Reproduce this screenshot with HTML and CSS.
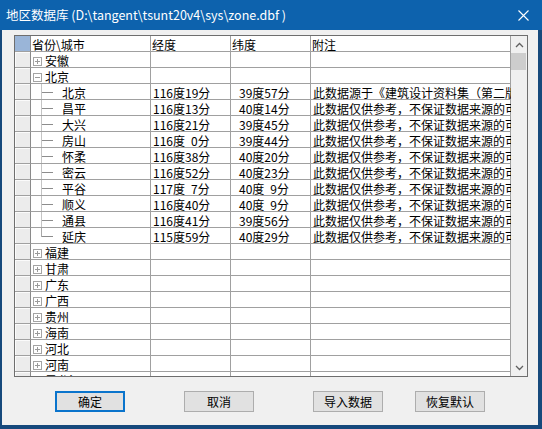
FILE: index.html
```html
<!DOCTYPE html>
<html lang="zh">
<head>
<meta charset="utf-8">
<title>地区数据库</title>
<link rel="stylesheet" href="styles.css">
</head>
<body>
<div class="window">
  <div class="titlebar">
    <span class="title">地区数据库 (D:\tangent\tsunt20v4\sys\zone.dbf )</span>
    <span class="close"><svg width="11" height="11" viewBox="0 0 11 11"><path d="M0.5 0.5L10.5 10.5M10.5 0.5L0.5 10.5" stroke="#fff" stroke-width="1.1" fill="none"/></svg></span>
  </div>
  <div class="client">
    <div class="grid">
      <div class="rows">
        <div class="row head"><div class="rh corner"></div><div class="c c1 hd"><span class="ht">省份\城市</span></div><div class="c c2 hd">经度</div><div class="c c3 hd">纬度</div><div class="c c4 hd">附注</div></div>
        <div class="row"><div class="rh"></div><div class="c c1"><span class="box plus"></span><span class="pt">安徽</span></div><div class="c c2"></div><div class="c c3"></div><div class="c c4"></div></div>
        <div class="row"><div class="rh"></div><div class="c c1"><span class="box"></span><span class="pt">北京</span></div><div class="c c2"></div><div class="c c3"></div><div class="c c4"></div></div>
        <div class="row"><div class="rh"></div><div class="c c1"><span class="branch"></span><span class="ct">北京</span></div><div class="c c2">116度19分</div><div class="c c3">39度57分</div><div class="c c4">此数据源于《建筑设计资料集（第二版）》</div></div>
        <div class="row"><div class="rh"></div><div class="c c1"><span class="branch"></span><span class="ct">昌平</span></div><div class="c c2">116度13分</div><div class="c c3">40度14分</div><div class="c c4">此数据仅供参考，不保证数据来源的可靠性</div></div>
        <div class="row"><div class="rh"></div><div class="c c1"><span class="branch"></span><span class="ct">大兴</span></div><div class="c c2">116度21分</div><div class="c c3">39度45分</div><div class="c c4">此数据仅供参考，不保证数据来源的可靠性</div></div>
        <div class="row"><div class="rh"></div><div class="c c1"><span class="branch"></span><span class="ct">房山</span></div><div class="c c2">116度&ensp;0分</div><div class="c c3">39度44分</div><div class="c c4">此数据仅供参考，不保证数据来源的可靠性</div></div>
        <div class="row"><div class="rh"></div><div class="c c1"><span class="branch"></span><span class="ct">怀柔</span></div><div class="c c2">116度38分</div><div class="c c3">40度20分</div><div class="c c4">此数据仅供参考，不保证数据来源的可靠性</div></div>
        <div class="row"><div class="rh"></div><div class="c c1"><span class="branch"></span><span class="ct">密云</span></div><div class="c c2">116度52分</div><div class="c c3">40度23分</div><div class="c c4">此数据仅供参考，不保证数据来源的可靠性</div></div>
        <div class="row"><div class="rh"></div><div class="c c1"><span class="branch"></span><span class="ct">平谷</span></div><div class="c c2">117度&ensp;7分</div><div class="c c3">40度&ensp;9分</div><div class="c c4">此数据仅供参考，不保证数据来源的可靠性</div></div>
        <div class="row"><div class="rh"></div><div class="c c1"><span class="branch"></span><span class="ct">顺义</span></div><div class="c c2">116度40分</div><div class="c c3">40度&ensp;9分</div><div class="c c4">此数据仅供参考，不保证数据来源的可靠性</div></div>
        <div class="row"><div class="rh"></div><div class="c c1"><span class="branch"></span><span class="ct">通县</span></div><div class="c c2">116度41分</div><div class="c c3">39度56分</div><div class="c c4">此数据仅供参考，不保证数据来源的可靠性</div></div>
        <div class="row"><div class="rh"></div><div class="c c1"><span class="branch last"></span><span class="ct">延庆</span></div><div class="c c2">115度59分</div><div class="c c3">40度29分</div><div class="c c4">此数据仅供参考，不保证数据来源的可靠性</div></div>
        <div class="row"><div class="rh"></div><div class="c c1"><span class="box plus"></span><span class="pt">福建</span></div><div class="c c2"></div><div class="c c3"></div><div class="c c4"></div></div>
        <div class="row"><div class="rh"></div><div class="c c1"><span class="box plus"></span><span class="pt">甘肃</span></div><div class="c c2"></div><div class="c c3"></div><div class="c c4"></div></div>
        <div class="row"><div class="rh"></div><div class="c c1"><span class="box plus"></span><span class="pt">广东</span></div><div class="c c2"></div><div class="c c3"></div><div class="c c4"></div></div>
        <div class="row"><div class="rh"></div><div class="c c1"><span class="box plus"></span><span class="pt">广西</span></div><div class="c c2"></div><div class="c c3"></div><div class="c c4"></div></div>
        <div class="row"><div class="rh"></div><div class="c c1"><span class="box plus"></span><span class="pt">贵州</span></div><div class="c c2"></div><div class="c c3"></div><div class="c c4"></div></div>
        <div class="row"><div class="rh"></div><div class="c c1"><span class="box plus"></span><span class="pt">海南</span></div><div class="c c2"></div><div class="c c3"></div><div class="c c4"></div></div>
        <div class="row"><div class="rh"></div><div class="c c1"><span class="box plus"></span><span class="pt">河北</span></div><div class="c c2"></div><div class="c c3"></div><div class="c c4"></div></div>
        <div class="row"><div class="rh"></div><div class="c c1"><span class="box plus"></span><span class="pt">河南</span></div><div class="c c2"></div><div class="c c3"></div><div class="c c4"></div></div>
        <div class="row"><div class="rh"></div><div class="c c1"><span class="box plus"></span><span class="pt">黑龙江</span></div><div class="c c2"></div><div class="c c3"></div><div class="c c4"></div></div>
      </div>
      <div class="vscroll">
        <div class="arrow"><svg width="9" height="6" viewBox="0 0 9 6"><path d="M1 5L4.5 1.5L8 5" stroke="#606060" stroke-width="1.3" fill="none"/></svg></div>
        <div class="thumb"></div>
        <div class="track"></div>
        <div class="arrow"><svg width="9" height="6" viewBox="0 0 9 6"><path d="M1 1L4.5 4.5L8 1" stroke="#606060" stroke-width="1.3" fill="none"/></svg></div>
      </div>
    </div>
    <div class="buttons">
      <div class="btn default">确定</div>
      <div class="btn">取消</div>
      <div class="btn">导入数据</div>
      <div class="btn last">恢复默认</div>
    </div>
  </div>
</div>
</body>
</html>
```

FILE: styles.css
```css
html, body {
  margin: 0;
  padding: 0;
  background: #f0f0f0;
}

.window {
  width: 542px;
  height: 429px;
  background: #16497c;
  display: flex;
  flex-direction: column;
  font-family: "Noto Sans CJK SC", "Liberation Sans", sans-serif;
  font-size: 12px;
  color: #000;
  overflow: hidden;
}

.titlebar {
  height: 30px;
  flex: none;
  background: #0d62ad;
  display: flex;
  align-items: center;
  color: #fff;
}

.title {
  padding-left: 6px;
  font-size: 12.5px;
  line-height: 30px;
  white-space: nowrap;
}

.close {
  margin-left: auto;
  margin-right: 13px;
  display: flex;
}

.client {
  flex: 1;
  margin: 0 4px 4px 2px;
  background: #f0f0f0;
  padding: 5px 0 0 12px;
  display: flex;
  flex-direction: column;
}

.grid {
  width: 512px;
  height: 340px;
  border: 1px solid #6e6e6e;
  background: #fff;
  display: flex;
  flex: none;
}

.rows {
  width: 496px;
  height: 340px;
  overflow: hidden;
}

.row {
  display: grid;
  grid-template-columns: 16px 120px 80px 80px 200px;
  height: 16px;
}

.rh {
  box-sizing: border-box;
  height: 16px;
  background: #ececec;
  border-right: 1px solid #8a8a8a;
  border-bottom: 1px solid #a0a0a0;
  box-shadow: inset 1px 1px 0 #fbfbfb;
}

.rh.corner {
  background: #9ab5d8;
  box-shadow: none;
}

.c {
  box-sizing: border-box;
  height: 16px;
  border-right: 1px solid #a0a0a0;
  border-bottom: 1px solid #a0a0a0;
  padding: 2px 0 0 2px;
  line-height: 13px;
  white-space: nowrap;
}

.c3 {
  padding-left: 8px;
}

.hd {
  padding-left: 1px;
}

.c1 {
  display: flex;
  align-items: flex-start;
  padding-top: 0;
}

.c1 .pt,
.c1 .ct,
.c1 .ht {
  padding-top: 2px;
  line-height: 13px;
}

.box {
  flex: none;
  box-sizing: border-box;
  width: 9px;
  height: 9px;
  margin-top: 5px;
  border: 1px solid #a4a4a4;
  background:
    linear-gradient(#9a9a9a, #9a9a9a) 1px 3px / 5px 1px no-repeat;
}

.box.plus {
  background:
    linear-gradient(#9a9a9a, #9a9a9a) 1px 3px / 5px 1px no-repeat,
    linear-gradient(#9a9a9a, #9a9a9a) 3px 1px / 1px 5px no-repeat;
}

.pt {
  margin-left: 3px;
}

.branch {
  flex: none;
  width: 12px;
  height: 15px;
  margin-left: 8px;
  background:
    linear-gradient(#c4c4c4, #c4c4c4) 0 0 / 1px 100% no-repeat,
    linear-gradient(#8c8c8c, #8c8c8c) 0 8px / 100% 1px no-repeat;
}

.branch.last {
  background:
    linear-gradient(#a8a8a8, #a8a8a8) 0 0 / 1px 9px no-repeat,
    linear-gradient(#8c8c8c, #8c8c8c) 0 8px / 100% 1px no-repeat;
}

.ct {
  margin-left: 9px;
}

.vscroll {
  width: 16px;
  height: 340px;
  background: #f0f0f0;
  display: flex;
  flex-direction: column;
}

.arrow {
  height: 17px;
  flex: none;
  display: flex;
  align-items: center;
  justify-content: center;
}

.thumb {
  height: 17px;
  flex: none;
  margin: 0 1px 0 0;
  background: #cdcdcd;
}

.track {
  flex: 1;
}

.buttons {
  display: flex;
  margin-top: 14px;
  padding-left: 41px;
}

.btn {
  box-sizing: border-box;
  width: 70px;
  height: 21px;
  background: #e1e1e1;
  border: 1px solid #adadad;
  display: flex;
  align-items: center;
  justify-content: center;
  font-size: 12px;
  line-height: 19px;
}

.btn + .btn {
  margin-left: 59px;
}

.btn.last {
  margin-left: 32px;
}

.btn.default {
  border: 2px solid #0a74cc;
}
```
